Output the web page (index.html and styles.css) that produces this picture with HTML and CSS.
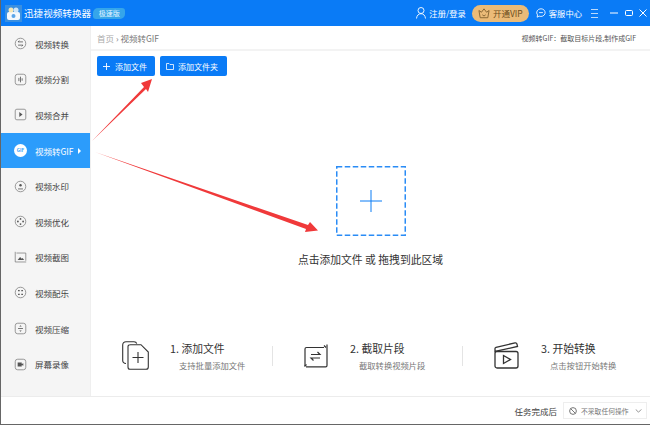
FILE: index.html
```html
<!DOCTYPE html>
<html lang="zh-CN">
<head>
<meta charset="utf-8">
<title>迅捷视频转换器</title>
<link rel="stylesheet" href="styles.css">
</head>
<body>
<div class="window">
  <header class="topbar">
    <svg class="logo" width="17" height="17" viewBox="0 0 17 17"><rect width="17" height="17" fill="#3a8fe0"/><rect x="2" y="7" width="13" height="8" rx="2" fill="#f4f8fc"/><circle cx="6" cy="5" r="2.500" fill="#f6e7b5"/><circle cx="11" cy="5" r="2.500" fill="#cfe6fa"/><circle cx="8.500" cy="11" r="2" fill="#5aa5e8"/></svg>
    <span class="app-name">迅捷视频转换器</span>
    <span class="edition">极速版</span>
    <div class="top-right">
      <svg class="user-icon" width="10" height="12" viewBox="0 0 10 12" fill="none" stroke="#fff" stroke-width=".9"><circle cx="5" cy="3.500" r="3"/><path d="M.5 11.500c.3-3 2-4.800 4.500-4.800s4.200 1.800 4.500 4.800"/></svg>
      <span class="login">注册/登录</span>
      <span class="vip">
        <svg width="12" height="11" viewBox="0 0 14 13" fill="none" stroke="#7a5a2a" stroke-width="1"><path d="M1 3l3 2 3-4 3 4 3-2-1.500 8.500h-9z"/><path d="M5 8l2 1.500 2-1.500"/></svg>
        开通VIP
      </span>
      <svg class="service-icon" width="10" height="10" viewBox="0 0 13 13" fill="none" stroke="#fff" stroke-width="1.100"><path d="M6.500 1a5.500 5 0 1 1-2.500 9.500L1.500 12l.5-3a5.500 5 0 0 1 4.500-8z"/><path d="M4 6h5"/></svg>
      <span class="service">客服中心</span>
      <svg class="menu" width="7" height="9" viewBox="0 0 7 9" stroke="#cfe4fc" stroke-width=".9"><path d="M0 .500h7M0 4.500h7M0 8.500h7"/></svg>
      <svg class="win-btn win-min" width="8" height="8" viewBox="0 0 8 8" stroke="#fff" stroke-width="1"><path d="M0 4h8"/></svg>
      <svg class="win-btn win-max" width="8" height="8" viewBox="0 0 8 8" fill="none" stroke="#fff" stroke-width="1"><rect x=".5" y="1.500" width="7" height="5" rx="1"/></svg>
      <svg class="win-btn win-close" width="8" height="8" viewBox="0 0 8 8" stroke="#fff" stroke-width="1"><path d="M.5.500l7 7M7.500.500l-7 7"/></svg>
    </div>
  </header>

  <div class="body">
    <nav class="sidebar">
      <a class="nav-item"><svg class="ni" viewBox="0 0 16 16"><circle cx="8" cy="8" r="6.500"/><path d="M5 6h6M5 6l1.500-1.500M11 10H5M11 10l-1.500 1.500" class="dk"/></svg><span>视频转换</span></a>
      <a class="nav-item"><svg class="ni" viewBox="0 0 16 16"><rect x="1.500" y="1.500" width="13" height="13" rx="3"/><path d="M6 6v4M8 4.500v7M10 6.500v3" class="dk"/></svg><span>视频分割</span></a>
      <a class="nav-item"><svg class="ni" viewBox="0 0 16 16"><rect x="1.500" y="1.500" width="13" height="13" rx="2"/><path d="M6.500 5l4 3-4 3z" class="fl"/></svg><span>视频合并</span></a>
      <a class="nav-item active"><span class="gif-dot">GIF</span><span>视频转GIF</span><i class="caret"></i></a>
      <a class="nav-item"><svg class="ni" viewBox="0 0 16 16"><circle cx="8" cy="8" r="6.500"/><circle cx="8" cy="6.500" r="1.500" class="fl"/><path d="M5 10.500h6v1H5z" class="fl"/></svg><span>视频水印</span></a>
      <a class="nav-item"><svg class="ni" viewBox="0 0 16 16"><circle cx="8" cy="8" r="6.500"/><circle cx="8" cy="4.800" r="1.100" class="fl"/><circle cx="4.800" cy="8" r="1.100" class="fl"/><circle cx="11.200" cy="8" r="1.100" class="fl"/><circle cx="8" cy="11.200" r="1.100" class="fl"/></svg><span>视频优化</span></a>
      <a class="nav-item"><svg class="ni" viewBox="0 0 16 16"><path d="M1.500 1v12.500H15M3 2.500h11.500V12"/><path d="M4.500 11l3-3.500 2 2 1-1 2 2.500z" class="fl"/></svg><span>视频截图</span></a>
      <a class="nav-item"><svg class="ni" viewBox="0 0 16 16"><circle cx="8" cy="8" r="6.500"/><path d="M5 6.500V5h2v1.500zM9 6.500V5h2v1.500zM5 11V9.500h2V11zM9 11V9.500h2V11z" class="fl"/></svg><span>视频配乐</span></a>
      <a class="nav-item"><svg class="ni" viewBox="0 0 16 16"><rect x="1.500" y="1.500" width="13" height="13" rx="3"/><path d="M5 8h6" class="dk"/><path d="M6.500 5.500L8 4l1.500 1.500zM6.500 10.500L8 12l1.500-1.500z" class="fl"/></svg><span>视频压缩</span></a>
      <a class="nav-item"><svg class="ni" viewBox="0 0 16 16"><rect x="1.500" y="1.500" width="13" height="13" rx="3"/><path d="M4.500 5.500h5v5h-5zM9.500 7.500l2-1v3l-2-1z" class="fl"/></svg><span>屏幕录像</span></a>
    </nav>

    <main class="content">
      <div class="crumbs">
        <span class="crumb-path"><span class="crumb-home">首页</span> › 视频转GIF</span>
        <span class="crumb-desc">视频转GIF：截取目标片段,制作成GIF</span>
      </div>
      <div class="actions">
        <button class="btn btn-file"><svg width="7" height="7" viewBox="0 0 7 7" stroke="#fff" stroke-width=".9"><path d="M3.500 0v7M0 3.500h7"/></svg>添加文件</button>
        <button class="btn btn-folder"><svg width="8" height="7" viewBox="0 0 8 7" fill="none" stroke="#fff" stroke-width=".8"><path d="M.5.500h2.500l1 1h3.500v5h-7z"/></svg>添加文件夹</button>
      </div>

      <div class="drop">
        <div class="drop-box">
          <svg class="drop-frame" width="70" height="70" viewBox="0 0 70 70" fill="none" stroke="#2a8cf6" stroke-width="1.500"><rect x=".75" y=".75" width="68.500" height="68.500" stroke-dasharray="5.500 2.500"/></svg>
          <svg class="drop-plus" width="22" height="22" viewBox="0 0 22 22" stroke="#0a7cf5" stroke-width="1"><path d="M11 0v22M0 11h22"/></svg>
        </div>
        <p class="drop-text">点击添加文件 或 拖拽到此区域</p>
      </div>

      <div class="steps">
        <div class="step step-1">
          <svg class="si" width="27" height="29" viewBox="0 0 27 29" fill="none" stroke="#333" stroke-width="1.100"><path d="M4 22.500c-2 0-3.300-1.200-3.300-3V4C.7 2 2 .7 4 .7h8c1.500 0 2.500 1 2.800 2"/><path d="M6 5.500C6 4 7.200 3.700 8.500 3.700h10.500L26.300 11v15c0 1.500-1 2.300-2.300 2.300H8C6.800 28.300 6 27.500 6 26z"/><path d="M16 11v11M10.500 16.500h11"/></svg>
          <div class="step-text"><h3>1. 添加文件</h3><p>支持批量添加文件</p></div>
        </div>
        <i class="sep"></i>
        <div class="step step-2">
          <svg class="si" width="25" height="24" viewBox="0 0 25 24" fill="none" stroke="#333" stroke-width="1.200"><path d="M21 3.500H3.500c-1 0-1.500.5-1.500 1.500v17"/><path d="M24 .5v21c0 .8-.5 1.300-1.300 1.300H3"/><path d="M21 1.500l2 2M3.500 20.500l-2 2"/><path d="M8 10.500h9l-2.500-2.500M17 14H8l2.500 2.500"/></svg>
          <div class="step-text"><h3>2. 截取片段</h3><p>截取转换视频片段</p></div>
        </div>
        <i class="sep"></i>
        <div class="step step-3">
          <svg class="si" width="25" height="27" viewBox="0 0 25 27" fill="none" stroke="#333" stroke-width="1.300"><path d="M1 9.500v-3c0-.5.300-1 1-1.200L21 .9c1-.2 1.700.2 1.900 1l.6 2.500L1 9.500z"/><rect x="1" y="9.500" width="23" height="16.500" rx="2"/><path d="M9.500 13.500l7 4-7 4z"/></svg>
          <div class="step-text"><h3>3. 开始转换</h3><p>点击按钮开始转换</p></div>
        </div>
      </div>
    </main>
  </div>

  <footer class="footer">
    <span class="after-label">任务完成后</span>
    <div class="select">
      <svg width="8" height="8" viewBox="0 0 9 9" fill="none" stroke="#666"><circle cx="4.500" cy="4.500" r="3.800"/><path d="M2 2l5 5"/></svg>
      <span class="select-text">不采取任何操作</span>
      <svg class="chev" width="7" height="4" viewBox="0 0 8 5" fill="none" stroke="#777"><path d="M.5.500L4 4 7.500.500"/></svg>
    </div>
  </footer>

  <svg class="arrows" width="650" height="425" viewBox="0 0 650 425">
    <path d="M92 141 L144 87 L141 83 L152 79 L148 92 L146 89 Z" fill="#f0393a"/>
    <path d="M95 152 L308 225 L310 222 L318 230.500 L305 232 L306 229 Z" fill="#f0393a"/>
  </svg>
</div>
</body>
</html>
```
FILE: styles.css
```css
* { box-sizing: border-box; }
html, body { margin: 0; padding: 0; }
body { width: 650px; height: 425px; overflow: hidden; background: #fff; font-family: "Noto Sans CJK SC", "Liberation Sans", sans-serif; color: #444; }
.window { position: relative; width: 650px; height: 425px; display: flex; flex-direction: column; border-left: 1px solid #666; border-bottom: 1px solid #666; }

.topbar { height: 26px; flex: none; background: #0a7bf6; color: #fff; display: flex; align-items: center; padding-left: 4px; }
.logo { flex: none; }
.app-name { margin-left: 2px; font-size: 9.600px; line-height: 26px; white-space: nowrap; }
.edition { margin-left: 2px; width: 32px; height: 11px; border-radius: 5px 3px 5px 3px; background: #35a5ea; color: #e6f6ff; font-size: 7px; line-height: 11px; text-align: center; }
.top-right { margin-left: auto; display: flex; align-items: center; font-size: 8.300px; white-space: nowrap; }
.login { margin-left: 3px; }
.vip { margin-left: 6px; width: 57px; height: 17px; border-radius: 9px; background: #ebbb78; color: #6b4d20; display: flex; align-items: center; justify-content: center; gap: 3px; font-size: 8.500px; }
.service-icon { margin-left: 7px; }
.service { margin-left: 3px; }
.menu { margin-left: 9px; }
.win-min { margin-left: 12px; }
.win-max { margin-left: 7px; }
.win-close { margin-left: 6px; margin-right: 3px; }

.body { flex: 1; display: flex; min-height: 0; }
.sidebar { width: 90px; flex: none; background: #f5f5f5; border-right: 1px solid #efefef; display: flex; flex-direction: column; }
.nav-item { height: 35.600px; display: flex; align-items: center; padding-left: 13px; font-size: 8.500px; color: #444; white-space: nowrap; }
.nav-item > span:not(.gif-dot) { margin-left: 8px; }
.nav-item.active { background: #2c9cfb; color: #fff; }
.ni { width: 13px; height: 13px; fill: none; stroke: #777; stroke-width: .9; flex: none; }
.ni .dk { stroke: #444; }
.ni .fl { fill: #555; stroke: none; }
.gif-dot { width: 13px; height: 13px; border-radius: 50%; background: #fff; color: #2c9cfb; font-size: 4.500px; font-weight: 700; line-height: 13px; text-align: center; flex: none; }
.caret { margin-left: 4px; width: 0; height: 0; border-left: 3px solid #fff; border-top: 3px solid transparent; border-bottom: 3px solid transparent; }

.content { flex: 1; display: flex; flex-direction: column; min-width: 0; }
.crumbs { height: 25px; flex: none; border-bottom: 2px solid #f3f3f3; display: flex; align-items: center; justify-content: space-between; padding: 0 14px 0 6px; font-size: 8.500px; color: #777; }
.crumb-home { color: #aaa; }
.crumb-desc { color: #555; font-size: 7px; }
.actions { display: flex; gap: 5px; padding: 5px 0 0 6px; flex: none; }
.btn { height: 20px; border: 0; border-radius: 2px; background: #0a7bf6; color: #fff; font: inherit; font-size: 8px; display: flex; align-items: center; padding: 0; }
.btn-file { width: 58px; padding-left: 6px; gap: 5px; }
.btn-folder { width: 67px; padding-left: 6px; gap: 4px; }

.drop { flex: none; display: flex; flex-direction: column; align-items: center; padding-top: 90px; }
.drop-box { position: relative; width: 70px; height: 70px; display: flex; align-items: center; justify-content: center; }
.drop-frame { position: absolute; left: 0; top: 0; }
.drop-text { margin: 14px 0 0; font-size: 10.800px; line-height: 18px; color: #333; white-space: nowrap; }

.steps { flex: none; margin-top: 72px; display: flex; align-items: center; padding-left: 31px; }
.step { display: flex; align-items: center; flex: none; }
.si { flex: none; }
.step-1 { width: 150px; }
.step-1 .step-text { margin-left: 21px; }
.step-2 { width: 189px; padding-left: 30px; }
.step-2 .step-text { margin-left: 22px; }
.step-3 { padding-left: 31px; }
.step-3 .step-text { margin-left: 22px; }
h3 { margin: 0; font-size: 10.800px; font-weight: 400; line-height: 16px; color: #333; white-space: nowrap; }
.step-text p { margin: 3px 0 0 9px; font-size: 8.300px; line-height: 12px; color: #777; white-space: nowrap; }
.sep { width: 1px; height: 20px; background: #e4e4e4; flex: none; }

.footer { height: 28px; flex: none; border-top: 1px solid #ececec; display: flex; align-items: center; justify-content: flex-end; padding-right: 3px; font-size: 8.500px; color: #444; }
.select { margin-left: 6px; width: 84px; height: 17px; border: 1px solid #eee; display: flex; align-items: center; padding-left: 5px; font-size: 6.800px; color: #777; gap: 4px; white-space: nowrap; }
.chev { margin-left: auto; margin-right: 4px; }

.arrows { position: absolute; left: -1px; top: 0; pointer-events: none; }
```
